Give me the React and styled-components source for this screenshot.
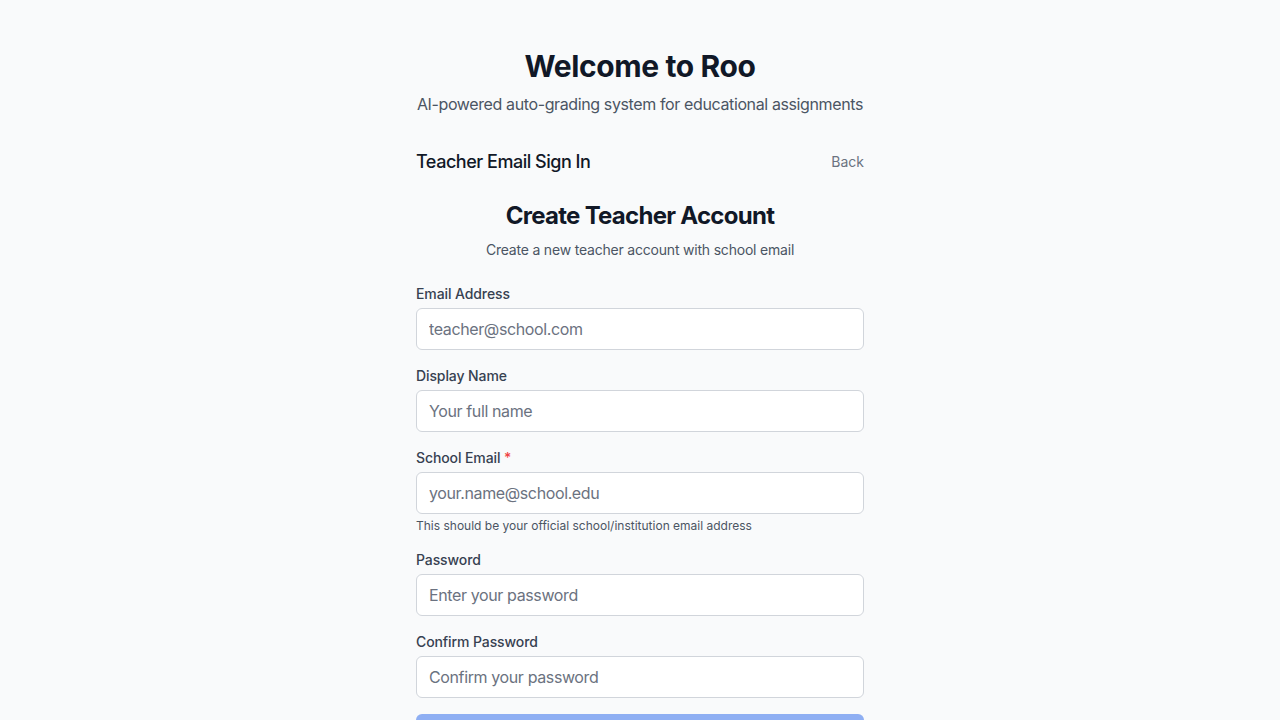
import React, { useState } from "react";
import styled, { createGlobalStyle } from "styled-components";

const GlobalStyle = createGlobalStyle`
  html, body {
    margin: 0;
    padding: 0;
    background: #f9fafb;
    font-family: Inter, "Noto Sans", "Liberation Sans", sans-serif;
    color: #111827;
  }
  * {
    box-sizing: border-box;
  }
`;

const Page = styled.div`
  min-height: 100vh;
  background: #f9fafb;
  padding: 48px 16px;
`;

const Container = styled.div`
  max-width: 448px;
  margin: 0 auto;
`;

const Header = styled.div`
  text-align: center;
`;

const Title = styled.h1`
  margin: 0;
  font-size: 30px;
  line-height: 36px;
  font-weight: 700;
  letter-spacing: -0.4px;
  color: #111827;
`;

const Tagline = styled.p`
  margin: 8px 0 0;
  font-size: 16px;
  line-height: 24px;
  letter-spacing: -0.38px;
  white-space: nowrap;
  color: #4b5563;
`;

const TopBar = styled.div`
  display: flex;
  justify-content: space-between;
  align-items: center;
  margin-top: 32px;
`;

const TopBarTitle = styled.h2`
  margin: 0;
  font-size: 18px;
  line-height: 28px;
  font-weight: 500;
  letter-spacing: -0.48px;
  color: #111827;
`;

const BackLink = styled.button`
  background: none;
  border: none;
  padding: 0;
  font: inherit;
  font-size: 14px;
  line-height: 20px;
  color: #6b7280;
  cursor: pointer;

  &:hover {
    color: #374151;
  }
`;

const FormHeader = styled.div`
  margin-top: 24px;
  text-align: center;
`;

const FormTitle = styled.h3`
  margin: 0;
  font-size: 24px;
  line-height: 32px;
  font-weight: 700;
  letter-spacing: -0.72px;
  color: #111827;
`;

const FormSubtitle = styled.p`
  margin: 8px 0 0;
  font-size: 14px;
  line-height: 20px;
  letter-spacing: -0.2px;
  color: #4b5563;
`;

const Form = styled.form`
  display: flex;
  flex-direction: column;
  gap: 16px;
  margin-top: 24px;
`;

const Field = styled.div`
  display: flex;
  flex-direction: column;
`;

const Label = styled.label`
  font-size: 14px;
  line-height: 20px;
  font-weight: 500;
  letter-spacing: -0.1px;
  color: #374151;
  margin-bottom: 4px;
`;

const Required = styled.span`
  color: #ef4444;
`;

const Input = styled.input`
  width: 100%;
  padding: 8px 12px;
  font: inherit;
  font-size: 16px;
  line-height: 24px;
  letter-spacing: -0.38px;
  color: #111827;
  background: #ffffff;
  border: 1px solid #d1d5db;
  border-radius: 6px;
  outline: none;

  &::placeholder {
    color: #6b7280;
  }

  &:focus {
    border-color: #3b82f6;
    box-shadow: 0 0 0 1px #3b82f6;
  }
`;

const Hint = styled.p`
  margin: 4px 0 0;
  font-size: 12px;
  line-height: 16px;
  color: #4b5563;
`;

const SubmitButton = styled.button`
  width: 100%;
  padding: 10px 16px;
  font: inherit;
  font-size: 16px;
  line-height: 24px;
  font-weight: 500;
  color: #ffffff;
  background: #2563eb;
  border: none;
  border-radius: 6px;
  cursor: pointer;

  &:disabled {
    opacity: 0.5;
    cursor: not-allowed;
  }
`;

const fields = [
  { name: "email", label: "Email Address", type: "email", placeholder: "teacher@school.com" },
  { name: "displayName", label: "Display Name", type: "text", placeholder: "Your full name" },
  {
    name: "schoolEmail",
    label: "School Email",
    type: "email",
    placeholder: "your.name@school.edu",
    required: true,
    hint: "This should be your official school/institution email address",
  },
  { name: "password", label: "Password", type: "password", placeholder: "Enter your password" },
  { name: "confirmPassword", label: "Confirm Password", type: "password", placeholder: "Confirm your password" },
];

const App = () => {
  const [values, setValues] = useState({});

  const handleChange = (e) => setValues({ ...values, [e.target.name]: e.target.value });

  const canSubmit = values.email && values.schoolEmail && values.password && values.confirmPassword;

  return (
    <>
      <GlobalStyle />
      <Page>
        <Container>
          <Header>
            <Title>Welcome to Roo</Title>
            <Tagline>AI-powered auto-grading system for educational assignments</Tagline>
          </Header>

          <TopBar>
            <TopBarTitle>Teacher Email Sign In</TopBarTitle>
            <BackLink type="button">Back</BackLink>
          </TopBar>

          <FormHeader>
            <FormTitle>Create Teacher Account</FormTitle>
            <FormSubtitle>Create a new teacher account with school email</FormSubtitle>
          </FormHeader>

          <Form onSubmit={(e) => e.preventDefault()}>
            {fields.map((f) => (
              <Field key={f.name}>
                <Label htmlFor={f.name}>
                  {f.label}
                  {f.required && <Required> *</Required>}
                </Label>
                <Input
                  id={f.name}
                  name={f.name}
                  type={f.type}
                  placeholder={f.placeholder}
                  value={values[f.name] || ""}
                  onChange={handleChange}
                />
                {f.hint && <Hint>{f.hint}</Hint>}
              </Field>
            ))}
            <SubmitButton type="submit" disabled={!canSubmit}>
              Create Account
            </SubmitButton>
          </Form>
        </Container>
      </Page>
    </>
  );
};

export default App;
